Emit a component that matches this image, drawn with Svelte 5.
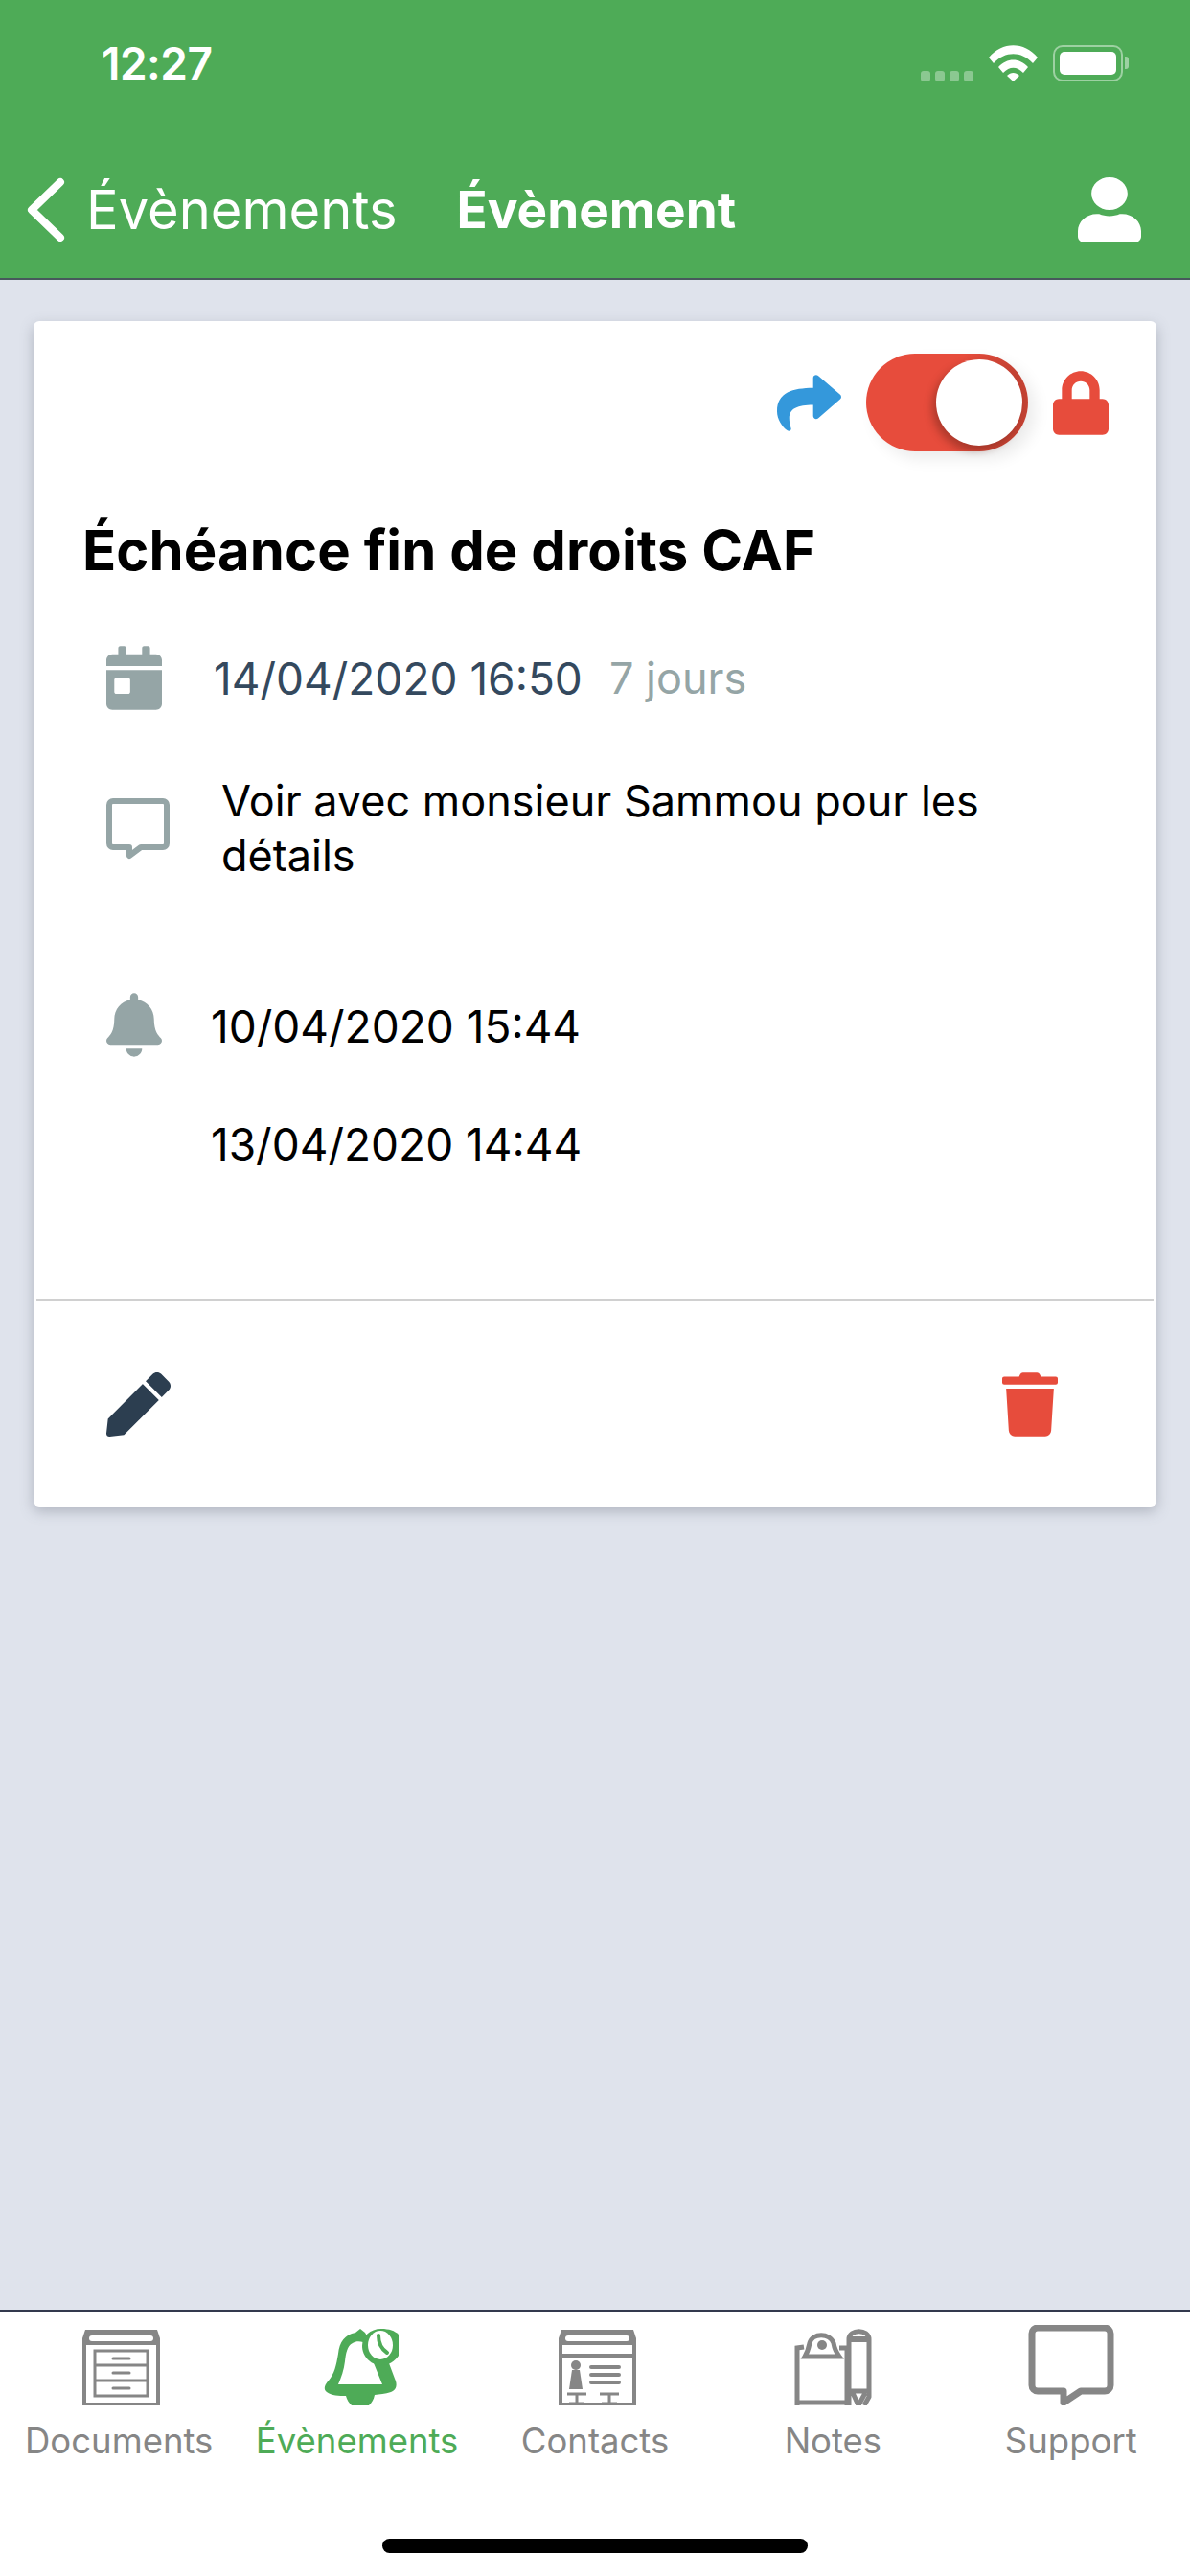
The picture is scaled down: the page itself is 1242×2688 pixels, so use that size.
<script lang="ts">
    const tabs = [
        { label: 'Documents', icon: 'documents' },
        { label: 'Évènements', icon: 'bell', active: true },
        { label: 'Contacts', icon: 'contacts' },
        { label: 'Notes', icon: 'notes' },
        { label: 'Support', icon: 'support' }
    ]
    const reminders = ['10/04/2020 15:44', '13/04/2020 14:44']
</script>

<div class="page">
    <header class="top">
        <div class="status">
            <span class="time">12:27</span>
            <div class="status-icons">
                <div class="signal"><i></i><i></i><i></i><i></i></div>
                <svg class="wifi" viewBox="0 0 51 38" width="51" height="38">
                    <path d="M0 13C14-4 37-4 51 13L46 19C34 6 17 6 5 19Z" fill="#fff" />
                    <path d="M10 23C19 13 32 13 41 23L36 29C29 22 22 22 15 29Z" fill="#fff" />
                    <path d="M19 32C23 28 28 28 32 32L25.500 38Z" fill="#fff" />
                </svg>
                <div class="battery"><b></b></div>
                <div class="nub"></div>
            </div>
        </div>
        <nav class="nav">
            <svg class="chevron" viewBox="0 0 41 68" width="41" height="68">
                <path d="M36 5L6 34L36 63" fill="none" stroke="#fff" stroke-width="8" stroke-linecap="round" stroke-linejoin="round" />
            </svg>
            <span class="back">Évènements</span>
            <span class="title">Évènement</span>
            <svg class="user" viewBox="0 0 448 512" width="66" height="68" preserveAspectRatio="none">
                <path fill="#fff" d="M224 256c70.700 0 128-57.300 128-128S294.700 0 224 0 96 57.300 96 128s57.300 128 128 128zm89.600 32h-16.700c-22.200 10.200-46.900 16-72.900 16s-50.600-5.800-72.900-16h-16.700C60.200 288 0 348.200 0 422.400V464c0 26.500 21.500 48 48 48h352c26.500 0 48-21.500 48-48v-41.600c0-74.200-60.200-134.400-134.400-134.400z" />
            </svg>
        </nav>
    </header>

    <main class="content">
        <section class="card">
            <div class="actions">
                <svg viewBox="0 0 512 512" width="67" height="67" class="share">
                    <path fill="#3498db" d="M503.691 189.836L327.687 37.851C312.281 24.546 288 35.347 288 56.015v80.053C127.371 137.907 0 170.100 0 322.326c0 61.441 39.581 122.309 83.333 154.132 13.653 9.931 33.111-2.533 28.077-18.631C66.066 312.814 132.917 274.316 288 272.085V360c0 20.700 24.300 31.453 39.687 18.164l176.004-152c11.071-9.562 11.086-26.753 0-36.328z" />
                </svg>
                <div class="toggle"><span class="knob"></span></div>
                <svg viewBox="0 0 448 512" width="58" height="67" class="lock">
                    <path fill="#e74c3c" d="M400 224h-24v-72C376 68.200 307.800 0 224 0S72 68.200 72 152v72H48c-26.500 0-48 21.500-48 48v192c0 26.500 21.500 48 48 48h352c26.500 0 48-21.500 48-48V272c0-26.500-21.500-48-48-48zm-104 0H152v-72c0-39.700 32.300-72 72-72s72 32.300 72 72v72z" />
                </svg>
            </div>

            <h1>Échéance fin de droits CAF</h1>

            <div class="row date-row">
                <svg viewBox="0 0 448 512" width="58" height="67">
                    <path fill="#95a5a6" d="M0 464c0 26.500 21.500 48 48 48h352c26.500 0 48-21.500 48-48V192H0v272zm64-192c0-8.800 7.200-16 16-16h96c8.800 0 16 7.200 16 16v96c0 8.800-7.200 16-16 16H80c-8.800 0-16-7.200-16-16v-96zM400 64h-48V16c0-8.800-7.200-16-16-16h-32c-8.800 0-16 7.200-16 16v48H160V16c0-8.800-7.200-16-16-16h-32c-8.800 0-16 7.200-16 16v48H48C21.500 64 0 85.500 0 112v48h448v-48c0-26.500-21.500-48-48-48z" />
                </svg>
                <span class="date">14/04/2020 16:50</span>
                <span class="delay">7 jours</span>
            </div>

            <div class="row comment-row">
                <svg viewBox="0 0 66 67" width="66" height="67">
                    <path d="M7 3H59A4 4 0 0 1 63 7V47A4 4 0 0 1 59 51H36L24 60V51H7A4 4 0 0 1 3 47V7A4 4 0 0 1 7 3Z" fill="none" stroke="#95a5a6" stroke-width="6" stroke-linejoin="round" />
                </svg>
                <p>Voir avec monsieur Sammou pour les détails</p>
            </div>

            <div class="reminders">
                <svg viewBox="0 0 448 512" width="58" height="67">
                    <path fill="#95a5a6" d="M224 512c35.320 0 63.970-28.650 63.970-64H160.030c0 35.350 28.650 64 63.970 64zm215.390-149.710c-19.320-20.760-55.470-51.990-55.470-154.290 0-77.700-54.480-139.900-127.940-155.160V32c0-17.670-14.320-32-31.980-32s-31.980 14.330-31.980 32v20.840C118.560 68.100 64.080 130.300 64.080 208c0 102.300-36.150 133.530-55.470 154.290-6 6.450-8.660 14.160-8.610 21.710.11 16.400 12.980 32 32.100 32h383.800c19.120 0 32-15.600 32.100-32 .05-7.550-2.610-15.270-8.610-21.710z" />
                </svg>
                <ul>
                    {#each reminders as reminder}
                        <li>{reminder}</li>
                    {/each}
                </ul>
            </div>

            <div class="card-footer">
                <svg viewBox="0 0 512 512" width="67" height="67">
                    <path fill="#2c3e50" d="M290.740 93.240l128.020 128.020-277.990 277.990-114.140 12.600C11.350 513.540-1.560 500.620.140 485.340l12.700-114.220 277.900-278.880zm207.200-19.060l-60.110-60.110c-18.750-18.750-49.160-18.750-67.910 0l-56.550 56.550 128.020 128.020 56.550-56.550c18.750-18.760 18.750-49.160 0-67.910z" />
                </svg>
                <svg viewBox="0 0 448 512" width="58" height="67">
                    <path fill="#e74c3c" d="M432 32H312l-9.400-18.700A24 24 0 0 0 281.100 0H166.800a23.720 23.720 0 0 0-21.400 13.300L136 32H16A16 16 0 0 0 0 48v32a16 16 0 0 0 16 16h416a16 16 0 0 0 16-16V48a16 16 0 0 0-16-16zM53.200 467a48 48 0 0 0 47.900 45h245.800a48 48 0 0 0 47.900-45L416 128H32z" />
                </svg>
            </div>
        </section>
    </main>

    <footer class="tabbar">
        <div class="tabs">
            {#each tabs as tab}
                <div class="tab" class:active={tab.active}>
                    <svg viewBox="0 0 90 84" width="90" height="84">
                        {#if tab.icon === 'documents'}
                            <path fill="#868686" d="M10 5H85L88 14V84H7V14Z" />
                            <rect x="14" y="11" width="67" height="6" rx="3" fill="#fff" />
                            <rect x="11" y="21" width="73" height="60" fill="#fff" />
                            <rect x="20" y="27" width="55" height="47" fill="none" stroke="#868686" stroke-width="3" />
                            <path d="M20 42H75M20 58H75" stroke="#868686" stroke-width="3" />
                            <path d="M39 35H56M39 50H56M39 66H56" stroke="#868686" stroke-width="3" stroke-linecap="round" />
                        {:else if tab.icon === 'bell'}
                            <path fill="#4eab57" d="M48 4L53 8L60 20L78 40L84 56C87 62 86 68 80 70C74 72 68 72 63 73C62 78 60 81 57 84H39C36 81 34 78 33 74C26 74 18 74 13 70C9 67 11 62 15 58C21 51 23 42 25 30C26 18 32 10 43 8Z" />
                            <path fill="#fff" d="M40 19C34 22 33 30 32 38C31 47 28 55 25 62H71L58 30L51 18C47 17 43 17 40 19Z" />
                            <path fill="#4eab57" d="M70 4C78 4 84 6 88 10V32C84 38 78 42 70 42C58 42 50 32 50 22C50 12 58 4 70 4Z" />
                            <ellipse cx="69" cy="21" rx="13" ry="15" fill="#fff" />
                            <path d="M67 11C67 19 70 25 76 29" fill="none" stroke="#4eab57" stroke-width="4" stroke-linecap="round" />
                        {:else if tab.icon === 'contacts'}
                            <path fill="#868686" d="M10 5H85L88 14V84H7V14Z" />
                            <rect x="14" y="11" width="67" height="6" rx="3" fill="#fff" />
                            <rect x="11" y="21" width="73" height="9" fill="#fff" />
                            <rect x="11" y="34" width="73" height="47" fill="#fff" />
                            <circle cx="25" cy="42" r="5" fill="#868686" />
                            <path fill="#868686" d="M21 47H29L32 67H18Z" />
                            <path d="M41 44H70M41 52H70M41 60H70" stroke="#868686" stroke-width="4" stroke-linecap="round" />
                            <path d="M16 72H36M26 72V82M18 82H34M50 72H70M60 72V82M52 82H68" stroke="#868686" stroke-width="3" />
                        {:else if tab.icon === 'notes'}
                            <path fill="none" stroke="#868686" stroke-width="5" d="M8 84V24L15 23M52 24L60 24V84M8 81H60" />
                            <path fill="none" stroke="#868686" stroke-width="5" d="M16 33C19 28 20 24 21 19C24 8 42 8 46 19C47 25 49 29 52 33Z" />
                            <circle cx="34" cy="21" r="5" fill="#868686" />
                            <path fill="none" stroke="#868686" stroke-width="5" d="M62 84V15C62 4 83 4 83 15V75L78 84M62 69H83M66 71L72 84L79 71" stroke-linejoin="round" />
                            <rect x="64" y="12" width="17" height="6" fill="#868686" />
                        {:else}
                            <path d="M9 3H79A6 6 0 0 1 85 9V63A6 6 0 0 1 79 69H54L36 81V69H9A6 6 0 0 1 3 63V9A6 6 0 0 1 9 3Z" transform="translate(1 0)" fill="none" stroke="#868686" stroke-width="7" stroke-linejoin="round" />
                        {/if}
                    </svg>
                    <span>{tab.label}</span>
                </div>
            {/each}
        </div>
        <div class="home-indicator"></div>
    </footer>
</div>

<style>
    :global(body) {
        margin: 0;
        background: #dfe3ec;
        font-family: Inter, "Noto Sans", sans-serif;
    }

    .page {
        display: flex;
        flex-direction: column;
        width: 1242px;
        height: 2688px;
        overflow: hidden;
    }

    .top {
        box-sizing: border-box;
        height: 292px;
        flex: none;
        background: #4eab57;
        border-bottom: 2px solid #47595c;
        color: #fff;
    }

    .status {
        box-sizing: border-box;
        display: flex;
        justify-content: space-between;
        align-items: flex-start;
        height: 166px;
        padding: 40px 64px 0 106px;
    }

    .time {
        font-size: 46px;
        line-height: 52px;
        font-weight: 600;
        letter-spacing: -0.5px;
    }

    .status-icons {
        display: flex;
        align-items: flex-start;
        margin-top: 7px;
    }

    .signal {
        display: flex;
        gap: 5px;
        margin: 27px 16px 0 0;
    }

    .signal i {
        width: 10px;
        height: 11px;
        border-radius: 3px;
        background: rgba(255, 255, 255, 0.35);
    }

    .wifi {
        margin-right: 16px;
    }

    .battery {
        box-sizing: border-box;
        width: 73px;
        height: 38px;
        padding: 5px;
        border: 2px solid rgba(255, 255, 255, 0.45);
        border-radius: 10px;
    }

    .battery b {
        display: block;
        height: 100%;
        border-radius: 5px;
        background: #fff;
    }

    .nub {
        width: 4px;
        height: 13px;
        margin: 12px 0 0 2px;
        border-radius: 0 3px 3px 0;
        background: rgba(255, 255, 255, 0.45);
    }

    .nav {
        display: flex;
        align-items: center;
        height: 106px;
        padding: 0 51px 0 27px;
    }

    .back {
        margin-left: 22px;
        font-size: 56px;
        line-height: 64px;
    }

    .title {
        margin-left: 62px;
        font-size: 53px;
        line-height: 64px;
        font-weight: 700;
    }

    .user {
        margin-left: auto;
    }

    .content {
        flex: 1;
        padding: 43px 35px 0;
    }

    .card {
        box-sizing: border-box;
        display: flex;
        flex-direction: column;
        height: 1237px;
        background: #fff;
        border-radius: 6px;
        box-shadow: 0 5px 14px rgba(90, 95, 110, 0.35);
        color: #000;
    }

    .actions {
        display: flex;
        justify-content: flex-end;
        align-items: center;
        height: 102px;
        padding: 34px 50px 0 0;
    }

    .share {
        margin-right: 26px;
    }

    .toggle {
        box-sizing: border-box;
        display: flex;
        justify-content: flex-end;
        width: 169px;
        height: 102px;
        padding: 6px;
        border-radius: 51px;
        background: linear-gradient(100deg, #e74c3c 55%, #c44233 85%);
        box-shadow: 8px 8px 16px rgba(0, 0, 0, 0.08);
    }

    .knob {
        width: 90px;
        height: 90px;
        border-radius: 50%;
        background: #fff;
        box-shadow: -4px 5px 8px rgba(90, 30, 20, 0.4);
    }

    .lock {
        margin-left: 26px;
    }

    h1 {
        margin: 70px 0 0 51px;
        font-size: 58px;
        line-height: 66px;
        font-weight: 700;
        letter-spacing: 0.1px;
    }

    .row {
        display: flex;
        padding-left: 76px;
    }

    .date-row {
        align-items: center;
        margin-top: 67px;
        font-size: 46px;
    }

    .date {
        margin-left: 54px;
        color: #34495e;
    }

    .delay {
        margin-left: 28px;
        font-size: 45px;
        color: #95a5a6;
    }

    .comment-row {
        margin-top: 66px;
    }

    .comment-row svg {
        flex: none;
        margin-top: 26px;
    }

    .comment-row p {
        margin: 0 0 0 54px;
        font-size: 45px;
        line-height: 57px;
        width: 860px;
    }

    .reminders {
        display: flex;
        align-items: flex-start;
        margin-top: 115px;
        padding-left: 76px;
    }

    ul {
        margin: 2px 0 0 51px;
        padding: 0;
        list-style: none;
        font-size: 46px;
    }

    li {
        height: 123px;
        line-height: 67px;
    }

    .card-footer {
        display: flex;
        justify-content: space-between;
        align-items: center;
        height: 214px;
        margin: auto 3px 0;
        border-top: 2px solid #d0d0d0;
        padding: 0 100px 0 73px;
    }

    .tabbar {
        box-sizing: border-box;
        height: 278px;
        flex: none;
        background: #fff;
        border-top: 2px solid #33394d;
    }

    .tabs {
        display: grid;
        grid-template-columns: repeat(5, 1fr);
        padding-top: 14px;
    }

    .tab {
        display: flex;
        flex-direction: column;
        align-items: center;
        color: #868686;
        font-size: 36.500px;
        line-height: 44px;
    }

    .tab.active {
        color: #4eab57;
    }

    .tab span {
        margin-top: 15px;
    }

    .home-indicator {
        width: 444px;
        height: 15px;
        margin: 80px auto 0;
        border-radius: 8px;
        background: #000;
    }
</style>
